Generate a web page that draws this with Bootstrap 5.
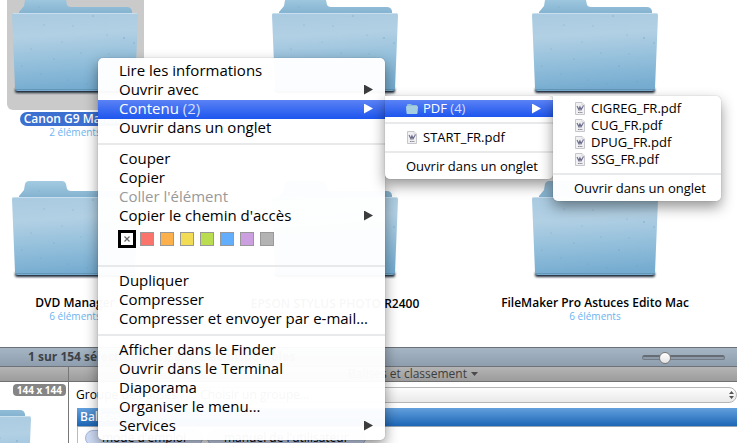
<!DOCTYPE html>
<html lang="fr">
<head>
<meta charset="utf-8">
<meta name="viewport" content="width=device-width, initial-scale=1">
<title>Documents</title>
<link href="https://cdn.jsdelivr.net/npm/bootstrap@5.3.0/dist/css/bootstrap.min.css" rel="stylesheet">
<style>
  body { font-family: "Open Sans", "Noto Sans", sans-serif; font-size: 12px; line-height: 14px; color: #000; background: #fff; }

  /* icon view */
  .icon-grid { display: grid; grid-template-columns: repeat(auto-fill, 150px); column-gap: 110px; row-gap: 20px; margin-top: -26px; padding-bottom: 25px; }
  .tile { height: 164px; white-space: nowrap; }
  .tile-icon { width: 137px; height: 137px; padding-top: 22px; border-radius: 6px; }
  .folder-art { width: 130px; height: 100px; flex: none; }
  .tile-name { font-weight: 600; line-height: 14px; margin-top: 2px; padding: 0 4px; border-radius: 7px; }
  .tile-info { font-size: 10px; line-height: 12px; color: #6cb4f0; }
  .tile.selected .tile-icon { background: #cacaca; }
  .tile.selected .tile-name { background: #3b6fd0; color: #fff; }

  /* bars */
  .status-bar { height: 20px; padding: 0 12px 0 28px; background: linear-gradient(#a6b5c4, #8f9eae); border-top: 1px solid #6b7076; border-bottom: 1px solid #6d7278; font-weight: 700; color: #3c4248; }
  .zoom-slider { appearance: none; width: 83px; height: 14px; background: none; }
  .zoom-slider::-webkit-slider-runnable-track { height: 5px; border-radius: 3px; background: #8d9aa8; border: 1px solid #737c86; border-top: 2px solid #656c74; }
  .zoom-slider::-webkit-slider-thumb { appearance: none; width: 12px; height: 12px; margin-top: -5px; border-radius: 50%; border: 1px solid #777; background: linear-gradient(#fff, #e4e4e4); }
  .pane-head { height: 15px; background: linear-gradient(#b4b4b4, #9c9c9c); border-bottom: 1px solid #707070; }
  .side { width: 69px; border-right: 1px solid #777; }
  .preview { height: 61px; padding: 2px 2px 0 0; }
  .size-tag { font-size: 10px; line-height: 12px; font-weight: 700; color: #fff; background: #858585; border-radius: 4px; padding: 0 4px; }
  .preview .folder-art { margin: 3px 33px 0 0; }
  .pane-title { color: #3d3d3d; padding-left: 20px; }
  .caret-mark { width: 7px; height: 4px; background: #4a4a4a; clip-path: polygon(0 0, 100% 0, 50% 100%); }
  .group-row { padding: 5px 0 5px 7px; }
  .group-select { appearance: none; height: 16px; font-size: 12px; line-height: 14px; padding: 0 8px; border: 1px solid #b5b5b5; border-radius: 8px; background: linear-gradient(#fdfdfd, #e9e9e9); color: #000; }
  .stepper { right: 3px; top: 4px; width: 5px; height: 8px; }
  .tag-head { height: 19px; margin-left: 8px; padding-left: 3px; color: #fff; font-weight: 600; background: linear-gradient(#63a0dd, #1c66b6); border-bottom: 1px solid #9aa6b2; line-height: 18px; }
  .tag-list { height: 16px; margin-left: 8px; padding: 3px 0 0 7px; border-left: 1px solid #bbb; }
  .tag-pill { border: 1px solid #a5b8dc; border-radius: 8px; background: #cfdcf5; color: #000; padding: 0 16px; font-size: 12px; line-height: 14px; }

  /* contextual menus */
  .ctx { background: rgba(255, 255, 255, .97); border-radius: 5px; padding: 4px 0; margin: 0; list-style: none; box-shadow: 0 6px 14px rgba(0, 0, 0, .42), 0 0 1px rgba(0, 0, 0, .4); }
  .ctx-main { left: 98px; top: 58px; width: 287px; font-size: 15px; }
  .ctx-sub { left: 100%; top: -4px; width: 168px; font-size: 13px; border-top-left-radius: 0; }
  .ctx-item { width: 100%; height: 19px; padding: 0 12px 2px 21px; border: 0; background: none; color: #000; white-space: nowrap; line-height: 17px; }
  .ctx-sub .ctx-item { height: 17px; padding-bottom: 0; }
  .ctx-item:disabled { color: #999; }
  .ctx-item.open { background: linear-gradient(#5b82f5, #1d55ee); color: #fff; }
  .ctx-item .count { color: #d5defc; }
  .arrow { width: 9px; height: 10px; background: #3c3c3c; clip-path: polygon(0 0, 100% 50%, 0 100%); }
  .open .arrow { background: #fff; }
  .ctx-line { height: 12px; padding-top: 5px; }
  .ctx-line::before { content: ""; display: block; height: 2px; background: #e8e9eb; }
  .ctx-icon { width: 12px; height: 13px; margin-right: 5px; flex: none; }
  .swatches { height: 34px; padding: 4px 0 12px 20px; gap: 6px; }
  .swatch { width: 14px; height: 14px; padding: 0; border: 1px solid #999; }
  .swatch-none { width: 18px; height: 18px; padding: 0; border: 3px solid #000; background: #fff; margin-right: -2px; }
  .swatch-none svg { display: block; margin: auto; }
  .sw-red { background: #fb746b; } .sw-orange { background: #fbb04b; } .sw-yellow { background: #f3dc55; }
  .sw-green { background: #b9dc50; } .sw-blue { background: #63aefc; } .sw-purple { background: #cb9fe0; } .sw-gray { background: #b3b3b3; }
</style>
<script src="https://cdn.jsdelivr.net/npm/bootstrap@5.3.0/dist/js/bootstrap.bundle.min.js"></script>
</head>
<body class="position-relative overflow-hidden">

<svg width="0" height="0" class="position-absolute" aria-hidden="true">
  <defs>
    <linearGradient id="front" x1=".1" y1="0" x2=".2" y2="1">
      <stop offset="0" stop-color="#a9cae0"/><stop offset=".3" stop-color="#b2d0e4"/><stop offset=".65" stop-color="#93bfdb"/><stop offset="1" stop-color="#76acd0"/>
    </linearGradient>
    <linearGradient id="back" x1="0" y1="0" x2="0" y2="1">
      <stop offset="0" stop-color="#a3cae2"/><stop offset="1" stop-color="#7fafcd"/>
    </linearGradient>
    <filter id="soft" x="-10%" y="-100%" width="120%" height="300%"><feGaussianBlur stdDeviation="1"/></filter>
  </defs>
  <symbol id="folder" viewBox="0 0 130 100">
    <rect x="5" y="92" width="120" height="5" rx="2" fill="#1d2c38" filter="url(#soft)"/>
    <path d="M9 20V16L14 10L15 4Q16 1 19 1H52Q55 1 56 4L57 9Q58 11 61 11H117Q121 11 122 15V20Z" fill="url(#back)"/>
    <path d="M2 19Q2 17 4 17H126Q128 17 128 20L125 92Q125 95 122 95H8Q5 95 5 92Z" fill="url(#front)"/>
    <path d="M3 17.500H127" stroke="#c7dfee" stroke-width="1"/>
    <path d="M5.500 93.500H124.500" stroke="#6396b7" stroke-width="1"/>
    <g fill="#6799ba" opacity=".65">
      <circle cx="114" cy="42" r=".8"/><circle cx="83" cy="20" r=".7"/><circle cx="63" cy="30" r=".6"/><circle cx="34" cy="29" r=".6"/><circle cx="124" cy="47" r=".7"/><circle cx="97" cy="39" r=".6"/><circle cx="21" cy="53" r=".6"/><circle cx="44" cy="63" r=".6"/><circle cx="71" cy="57" r=".6"/><circle cx="89" cy="70" r=".7"/><circle cx="107" cy="86" r=".6"/><circle cx="31" cy="78" r=".6"/><circle cx="58" cy="84" r=".6"/><circle cx="77" cy="88" r=".6"/><circle cx="12" cy="70" r=".6"/><circle cx="29" cy="11" r=".5"/><circle cx="52" cy="46" r=".5"/><circle cx="99" cy="58" r=".5"/>
    </g>
  </symbol>
  <symbol id="mini-folder" viewBox="0 0 12 13">
    <path d="M1 3Q1 2 2 2H5L6 3H10.500Q11 3 11 4V6H1Z" fill="#8fc0d8"/>
    <path d="M0 5Q0 4 1 4H11Q12 4 12 5L11.500 11Q11.500 12 10.500 12H1.500Q.5 12 .5 11Z" fill="#a5cfe0"/>
  </symbol>
  <symbol id="pdf-doc" viewBox="0 0 12 13">
    <path d="M1.500 .5H8L10.500 3V12.500H1.500Z" fill="#f1f1f3" stroke="#c6c6cc"/>
    <path d="M8 .5V3H10.500" fill="#fff" stroke="#c6c6cc" stroke-width=".7"/>
    <path d="M3 4L5 8L6 5L7 8L9.500 3.500M5 5L8 7" stroke="#6b6c8c" stroke-width="1.100" fill="none"/>
    <path d="M4 10.500H8.500" stroke="#88888e" stroke-width="1.200" stroke-dasharray="1.200 .4"/>
  </symbol>
</svg>

<main>
  <section class="overflow-hidden" aria-label="Dossiers">
    <div class="icon-grid">
      <div class="tile selected d-flex flex-column align-items-center">
        <div class="tile-icon d-flex justify-content-center"><svg class="folder-art"><use href="#folder"/></svg></div>
        <div class="tile-name">Canon G9 Manuel</div><div class="tile-info">2 éléments</div>
      </div>
      <div class="tile d-flex flex-column align-items-center">
        <div class="tile-icon d-flex justify-content-center"><svg class="folder-art"><use href="#folder"/></svg></div>
      </div>
      <div class="tile d-flex flex-column align-items-center">
        <div class="tile-icon d-flex justify-content-center"><svg class="folder-art"><use href="#folder"/></svg></div>
      </div>
      <div class="tile d-flex flex-column align-items-center">
        <div class="tile-icon d-flex justify-content-center"><svg class="folder-art"><use href="#folder"/></svg></div>
        <div class="tile-name">DVD Manager</div><div class="tile-info">6 éléments</div>
      </div>
      <div class="tile d-flex flex-column align-items-center">
        <div class="tile-icon d-flex justify-content-center"><svg class="folder-art"><use href="#folder"/></svg></div>
        <div class="tile-name">EPSON STYLUS PHOTO R2400</div>
      </div>
      <div class="tile d-flex flex-column align-items-center">
        <div class="tile-icon d-flex justify-content-center"><svg class="folder-art"><use href="#folder"/></svg></div>
        <div class="tile-name">FileMaker Pro Astuces Edito Mac</div><div class="tile-info">6 éléments</div>
      </div>
    </div>
  </section>

  <div class="status-bar d-flex align-items-center justify-content-between">
    <span>1 sur 154 sélectionné(s), 384,1 Go disponibles</span>
    <input type="range" class="zoom-slider" min="0" max="100" value="23" aria-label="Taille des icônes">
  </div>

  <div class="d-flex">
    <aside class="side flex-shrink-0">
      <div class="pane-head"></div>
      <div class="preview d-flex flex-column align-items-end overflow-hidden">
        <span class="size-tag">144 x 144</span>
        <svg class="folder-art"><use href="#folder"/></svg>
      </div>
    </aside>
    <section class="flex-grow-1 overflow-hidden">
      <div class="pane-head pane-title d-flex align-items-center justify-content-center gap-1">Balises et classement <span class="caret-mark"></span></div>
      <div class="group-row d-flex align-items-center gap-2">
        <label for="group">Groupe de balises :</label>
        <div class="position-relative flex-grow-1 d-flex">
          <select id="group" class="group-select w-100"><option>Choisir un groupe…</option></select>
          <svg class="stepper position-absolute" viewBox="0 0 5 8"><path d="M0 3L2.500 0L5 3ZM0 5L2.500 8L5 5Z" fill="#555"/></svg>
        </div>
      </div>
      <div class="tag-head">Balises</div>
      <div class="tag-list d-flex align-items-start gap-1">
        <button type="button" class="tag-pill">mode d'emploi</button>
        <button type="button" class="tag-pill">manuel de l'utilisateur</button>
      </div>
    </section>
  </div>
</main>

<ul class="ctx ctx-main position-absolute">
  <li><button type="button" class="ctx-item d-flex align-items-center">Lire les informations</button></li>
  <li><button type="button" class="ctx-item d-flex align-items-center justify-content-between">Ouvrir avec<span class="arrow"></span></button></li>
  <li class="position-relative">
    <button type="button" class="ctx-item open d-flex align-items-center justify-content-between"><span>Contenu <span class="count">(2)</span></span><span class="arrow"></span></button>
    <ul class="ctx ctx-sub position-absolute">
      <li class="position-relative">
        <button type="button" class="ctx-item open d-flex align-items-center"><svg class="ctx-icon"><use href="#mini-folder"/></svg><span class="me-auto">PDF <span class="count">(4)</span></span><span class="arrow"></span></button>
        <ul class="ctx ctx-sub position-absolute">
          <li><button type="button" class="ctx-item d-flex align-items-center"><svg class="ctx-icon"><use href="#pdf-doc"/></svg>CIGREG_FR.pdf</button></li>
          <li><button type="button" class="ctx-item d-flex align-items-center"><svg class="ctx-icon"><use href="#pdf-doc"/></svg>CUG_FR.pdf</button></li>
          <li><button type="button" class="ctx-item d-flex align-items-center"><svg class="ctx-icon"><use href="#pdf-doc"/></svg>DPUG_FR.pdf</button></li>
          <li><button type="button" class="ctx-item d-flex align-items-center"><svg class="ctx-icon"><use href="#pdf-doc"/></svg>SSG_FR.pdf</button></li>
          <li class="ctx-line"></li>
          <li><button type="button" class="ctx-item d-flex align-items-center">Ouvrir dans un onglet</button></li>
        </ul>
      </li>
      <li class="ctx-line"></li>
      <li><button type="button" class="ctx-item d-flex align-items-center"><svg class="ctx-icon"><use href="#pdf-doc"/></svg>START_FR.pdf</button></li>
      <li class="ctx-line"></li>
      <li><button type="button" class="ctx-item d-flex align-items-center">Ouvrir dans un onglet</button></li>
    </ul>
  </li>
  <li><button type="button" class="ctx-item d-flex align-items-center">Ouvrir dans un onglet</button></li>
  <li class="ctx-line"></li>
  <li><button type="button" class="ctx-item d-flex align-items-center">Couper</button></li>
  <li><button type="button" class="ctx-item d-flex align-items-center">Copier</button></li>
  <li><button type="button" class="ctx-item d-flex align-items-center" disabled>Coller l'élément</button></li>
  <li><button type="button" class="ctx-item d-flex align-items-center justify-content-between">Copier le chemin d'accès<span class="arrow"></span></button></li>
  <li class="swatches d-flex align-items-center">
    <button type="button" class="swatch-none" aria-label="Aucune étiquette"><svg width="6" height="6" viewBox="0 0 6 6"><path d="M.5 .5L5.500 5.500M5.500 .5L.5 5.500" stroke="#666" stroke-width="1.200"/></svg></button>
    <button type="button" class="swatch sw-red" aria-label="Rouge"></button>
    <button type="button" class="swatch sw-orange" aria-label="Orange"></button>
    <button type="button" class="swatch sw-yellow" aria-label="Jaune"></button>
    <button type="button" class="swatch sw-green" aria-label="Vert"></button>
    <button type="button" class="swatch sw-blue" aria-label="Bleu"></button>
    <button type="button" class="swatch sw-purple" aria-label="Violet"></button>
    <button type="button" class="swatch sw-gray" aria-label="Gris"></button>
  </li>
  <li class="ctx-line"></li>
  <li><button type="button" class="ctx-item d-flex align-items-center">Dupliquer</button></li>
  <li><button type="button" class="ctx-item d-flex align-items-center">Compresser</button></li>
  <li><button type="button" class="ctx-item d-flex align-items-center">Compresser et envoyer par e-mail…</button></li>
  <li class="ctx-line"></li>
  <li><button type="button" class="ctx-item d-flex align-items-center">Afficher dans le Finder</button></li>
  <li><button type="button" class="ctx-item d-flex align-items-center">Ouvrir dans le Terminal</button></li>
  <li><button type="button" class="ctx-item d-flex align-items-center">Diaporama</button></li>
  <li><button type="button" class="ctx-item d-flex align-items-center">Organiser le menu…</button></li>
  <li><button type="button" class="ctx-item d-flex align-items-center justify-content-between">Services<span class="arrow"></span></button></li>
</ul>
</body>
</html>
